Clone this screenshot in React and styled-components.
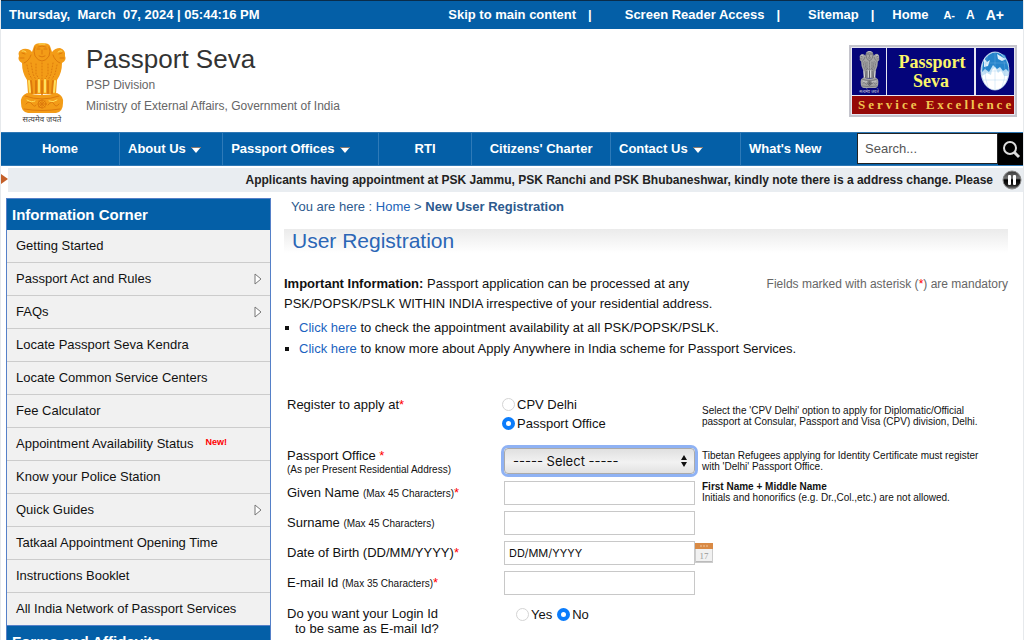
import { useState } from 'react';
import { createGlobalStyle, styled } from 'styled-components';

const GlobalStyle = createGlobalStyle`
	* {
		box-sizing: border-box;
	}
	body {
		margin: 0;
		background: #fff;
		color: #111;
		font-family: 'Liberation Sans', Arial, sans-serif;
		font-size: 13px;
	}
	ul {
		list-style: none;
		margin: 0;
		padding: 0;
	}
	a {
		color: inherit;
		text-decoration: none;
	}
	input, select, button {
		font-family: inherit;
		margin: 0;
	}
`;

const Page = styled.div`
	height: 100vh;
	overflow: auto;
	scrollbar-width: none;
	border-left: 1px solid #e6e9ec;
	border-right: 1px solid #e6e9ec;
`;

const TopBar = styled.div`
	display: flex;
	justify-content: space-between;
	align-items: center;
	padding: 0 19px 0 8px;
	border-top: 1px solid #0a2c4a;
	background: #045fa7;
	color: #fff;
	font-weight: bold;
	line-height: 28px;
`;

const Clock = styled.div`
	white-space: pre;
`;

const TopLinks = styled.nav`
	display: flex;
	align-items: center;
`;

const TopLink = styled.a`
	margin-right: ${({ $gap }) => $gap || 12}px;
`;

const Bar = styled.span`
	margin-right: ${({ $gap }) => $gap}px;
`;

const SizeButton = styled.button`
	border: 0;
	padding: 0;
	margin-left: 11px;
	background: none;
	color: #fff;
	font-weight: bold;
	font-size: ${({ $size }) => $size}px;
`;

const Header = styled.header`
	display: flex;
	align-items: flex-start;
	padding: 14px 6px 7px 16px;

	.emblem {
		width: 50px;
		height: 82px;
		margin-right: 19px;
	}
	.logo {
		width: 168px;
		height: 72px;
		margin: 2px 0 0 auto;
	}
`;

const Brand = styled.div`
	color: #666;
	font-size: 12px;
	line-height: 21px;

	h1 {
		margin: 0 0 -1px;
		color: #333;
		font-size: 26px;
		font-weight: normal;
		line-height: 33px;
	}
	p {
		margin: 0;
	}
`;

const NavBar = styled.div`
	display: flex;
	border-top: 1px solid #2f78b5;
	border-bottom: 1px solid #2f78b5;
	background: #045fa7;
`;

const NavList = styled.ul`
	display: flex;
	flex: 1;
`;

const NavItem = styled.li`
	flex: ${({ $share }) => $share} 1 0;
	border-right: 1px solid #2e7ab8;
	&:last-child {
		border-right: 0;
	}
	a {
		display: flex;
		align-items: center;
		justify-content: ${({ $left }) => ($left ? 'flex-start' : 'center')};
		gap: 5px;
		padding: 0 8px;
		color: #fff;
		font-weight: bold;
		line-height: 32px;
		white-space: nowrap;
	}
	svg {
		margin-top: 2px;
	}
`;

const Search = styled.form`
	display: flex;
	width: 166px;

	input {
		flex: 1;
		min-width: 0;
		margin-bottom: 1px;
		padding: 0 7px;
		border: 1px solid #222;
		border-radius: 0;
		font-size: 13px;
		outline: 0;
		&::placeholder {
			color: #555;
		}
	}
	button {
		width: 25px;
		padding: 0;
		border: 0;
		background: #000;
		line-height: 0;
	}
`;

const Ticker = styled.div`
	display: flex;
	align-items: center;
	margin-top: 2px;
	line-height: 24px;

	p {
		flex: 1;
		margin: 0;
		padding-right: 8px;
		background: #e9edf1;
		color: #222;
		font-size: 12px;
		font-weight: bold;
		text-align: right;
		white-space: nowrap;
	}
	button {
		height: 24px;
		padding: 0 1px;
		border: 0;
		background: #e9edf1;
		line-height: 0;
	}
`;

const Columns = styled.div`
	display: flex;
	align-items: flex-start;
	gap: 13px;
	padding: 6px 15px 0 5px;
`;

const Sidebar = styled.aside`
	width: 265px;
	flex-shrink: 0;
	border: 1px solid #5580c8;
`;

const SideTitle = styled.h2`
	margin: 0;
	padding: 0 5px;
	background: #045fa7;
	color: #fff;
	font-size: 15px;
	line-height: 31px;
`;

const SideItem = styled.li`
	border-bottom: 1px solid #ccc;
	background: #f1f1f1;
	&:last-child {
		border-bottom-color: #5580c8;
	}
	a {
		display: flex;
		align-items: center;
		padding: 0 8px 0 9px;
		line-height: 32px;
	}
	svg {
		margin-left: auto;
	}
	sup {
		margin: -4px 0 0 12px;
		color: #f00;
		font: bold 9px/12px 'Liberation Sans', Arial, sans-serif;
	}
`;

const Main = styled.main`
	flex: 1;
	min-width: 0;
`;

const Crumbs = styled.nav`
	padding-left: 7px;
	color: #2d5a8e;
	line-height: 17px;
	a {
		color: #1b63b8;
	}
`;

const PageTitle = styled.h2`
	margin: 14px 0 0;
	padding-left: 8px;
	background: linear-gradient(#ebebeb, #fff);
	color: #2b66b6;
	font-size: 21px;
	font-weight: normal;
	line-height: 24px;
`;

const Intro = styled.div`
	display: flex;
	justify-content: space-between;
	align-items: flex-start;
	margin-top: 21px;
	line-height: 20px;

	p {
		margin: 0;
	}
	small {
		color: #666;
		font-size: 12px;
		white-space: nowrap;
	}
`;

const Notes = styled.ul`
	padding: 3px 0 0 1px;
	line-height: 21px;
	li {
		display: flex;
		align-items: center;
		gap: 10px;
	}
	li::before {
		content: '';
		width: 4px;
		height: 4px;
		background: #111;
	}
	a {
		color: #1b63c0;
	}
`;

const Form = styled.form`
	display: flex;
	flex-direction: column;
	gap: 6px;
	padding: 36px 0 0 3px;
`;

const Row = styled.div`
	display: grid;
	grid-template-columns: 217px 191px 1fr;
	align-items: start;
	min-height: 24px;
	padding-bottom: ${({ $after }) => $after || 0}px;
`;

const Label = styled.label`
	line-height: ${({ $line }) => $line || 24}px;
	small {
		font-size: 10px;
		line-height: 1;
	}
	small.below {
		display: block;
		line-height: 10px;
	}
	.indent {
		display: block;
		padding-left: 8px;
	}
`;

const Question = styled(Label)`
	padding-top: 5px;
`;

const Star = styled.span`
	color: #f00;
`;

const Help = styled.p`
	margin: 0;
	padding: ${({ $top }) => $top || 0}px 0 0 7px;
	font-size: 10px;
	line-height: 11px;
`;

const TextInput = styled.input`
	width: 100%;
	height: 24px;
	padding: 0 4px;
	border: 1px solid #c8c8c8;
	border-radius: 0;
	background: #fff;
	color: #111;
	font-family: Inter, 'Liberation Sans', sans-serif;
	font-size: 11px;
	outline: 0;
`;

const WithButton = styled.div`
	display: flex;
	button {
		padding: 2px 0 0;
		border: 0;
		background: none;
		line-height: 0;
	}
`;

const SelectBox = styled.div`
	position: relative;
	margin-top: 2px;

	select {
		appearance: none;
		display: block;
		width: 100%;
		height: 26px;
		padding: 0 8px;
		border: 1px solid #aaa;
		border-radius: 4px;
		background: linear-gradient(#e0e0e0, #f2f2f2 55%, #e2e2e2);
		box-shadow: 0 0 0 3px #8fb2f4;
		color: #111;
		font-family: Inter, 'Liberation Sans', sans-serif;
		font-size: 13px;
		outline: 0;
	}
	svg {
		position: absolute;
		top: 7px;
		right: 7px;
		pointer-events: none;
	}
`;

const RadioGroup = styled.div`
	display: flex;
	flex-direction: ${({ $inline }) => ($inline ? 'row' : 'column')};
	gap: ${({ $inline }) => ($inline ? 5 : 0)}px;
	padding-left: ${({ $inline }) => ($inline ? 14 : 0)}px;
	padding-top: ${({ $inline }) => ($inline ? 4 : 0)}px;
	margin-left: -2px;
`;

const RadioLabel = styled.label`
	display: flex;
	align-items: center;
	gap: 2px;
	line-height: 19px;

	input {
		appearance: none;
		width: 13px;
		height: 13px;
		border: 1px solid #d4d4d4;
		border-radius: 50%;
		background: #fff;
		&:checked {
			border: 4px solid #0b7cfb;
		}
	}
`;

const navItems = [
	{ text: 'Home', share: 119 },
	{ text: 'About Us', share: 103, menu: true },
	{ text: 'Passport Offices', share: 156, menu: true },
	{ text: 'RTI', share: 93 },
	{ text: "Citizens' Charter", share: 139 },
	{ text: 'Contact Us', share: 130, menu: true },
	{ text: "What's New", share: 117, left: true },
];

const sideItems = [
	{ text: 'Getting Started' },
	{ text: 'Passport Act and Rules', more: true },
	{ text: 'FAQs', more: true },
	{ text: 'Locate Passport Seva Kendra' },
	{ text: 'Locate Common Service Centers' },
	{ text: 'Fee Calculator' },
	{ text: 'Appointment Availability Status', isNew: true },
	{ text: 'Know your Police Station' },
	{ text: 'Quick Guides', more: true },
	{ text: 'Tatkaal Appointment Opening Time' },
	{ text: 'Instructions Booklet' },
	{ text: 'All India Network of Passport Services' },
];

const gold = { base: '#f39c17', dark: '#dd7a0c', light: '#ffe05e', text: '#444' };
const silver = { base: '#a4a4a4', dark: '#4c4c55', light: '#e8e8e8', text: '#ccd' };

const Lions = ({ tone }) => (
	<g>
		<path
			d='M17 3Q18 0 25 0T33 3L35 9Q38 5 43 5Q49 7 48 13Q50 17 45 20Q45 30 40 37L39 51H11L10 37Q5 30 5 20Q0 17 2 13Q0 8 6 6Q12 5 15 9Z'
			fill={tone.base}
		/>
		<path d='M10 50Q25 54 40 50Q47 53 46 60Q46 69 39 70H11Q4 69 4 60Q3 53 10 50Z' fill={tone.base} />
		<g fill='none' stroke={tone.dark} strokeWidth='1' strokeLinecap='round'>
			<path d='M18 4Q16 8 18 13Q21 18 25 18Q29 18 32 13Q34 8 32 4' />
			<path d='M20 6H23M27 6H30M25 7V11M22 13Q25 15 28 13M21 4Q25 2 29 4' />
			<path d='M5 10L8 11M3 15H7M7 20Q12 18 14 12M45 10L42 11M47 15H43M43 20Q38 18 36 12' />
			<path d='M10 22L12 31L15 36M14 20L16 31L19 37M19 21V31L22 36M25 20V38M31 21V31L28 36M36 20L34 31L31 37M40 22L38 31L35 36' strokeDasharray='1 2' />
			<path d='M14 38L15 50M19 38V50M25 38V51M31 38V50M36 38L35 50' strokeWidth='2' />
			<path d='M8 53Q25 59 42 53M7 66Q25 69 43 66' />
			<circle cx='25' cy='61' r='4' />
			<path d='M25 57V65M21 61H29M22 58L28 64M28 58L22 64M9 61Q12 57 15 61T19 62M31 62Q35 57 37 61T42 61' />
		</g>
		<g fill='none' stroke={tone.light} strokeWidth='2' strokeLinecap='round'>
			<path d='M12 38L13 49M22 37V49M28 37V49M38 38L37 49' />
			<path d='M10 57Q15 60 18 58M32 58Q36 60 40 57' strokeWidth='1' />
			<path d='M5 8Q7 7 9 9M41 9Q43 7 45 8M22 1H28' strokeWidth='1' />
		</g>
	</g>
);

const Emblem = () => (
	<svg className='emblem' viewBox='0 0 50 82' role='img' aria-label='State Emblem of India'>
		<Lions tone={gold} />
		<text x='25' y='79' textAnchor='middle' fontSize='8' fontFamily='"Noto Sans", sans-serif' fill={gold.text}>
			सत्यमेव जयते
		</text>
	</svg>
);

const SevaLogo = () => (
	<svg className='logo' viewBox='0 0 168 72' role='img' aria-label='Passport Seva, Service Excellence'>
		<rect width='168' height='72' fill='#c4c4cc' />
		<rect x='2' y='2' width='164' height='68' fill='#e6e6f2' />
		<rect x='3' y='3' width='34' height='47' fill='#04047a' />
		<rect x='38' y='3' width='87' height='47' fill='#04047a' />
		<rect x='127' y='3' width='38' height='47' fill='#04047a' />
		<rect x='3' y='51' width='162' height='18' fill='#950808' />
		<g transform='translate(10 6) scale(.42 .53)'>
			<Lions tone={silver} />
		</g>
		<text x='20' y='48' textAnchor='middle' fontSize='4' fontFamily='"Noto Sans", sans-serif' fill={silver.text}>
			सत्यमेव जयते
		</text>
		<g fontFamily='"Liberation Serif", serif' fontSize='18' fontWeight='bold' fill='#fbf56a' textAnchor='middle'>
			<text x='83' y='23'>Passport</text>
			<text x='82' y='42'>Seva</text>
		</g>
		<text x='9' y='64' fontSize='13' fontWeight='bold' letterSpacing='3' fontFamily='"Liberation Serif", serif' fill='#f2c550'>
			Service Excellence
		</text>
		<ellipse cx='146' cy='26' rx='14' ry='19' fill='#c5e2f5' />
		<path d='M134 17Q139 8 147 7L156 10L160 19V27L157 24L154 26L151 22L148 24L144 20L140 27L136 24L133 27Z' fill='#2584cb' />
		<path d='M135 13L138 17L141 15L139 21L135 22ZM148 9L153 12L157 14L153 16L149 14Z' fill='#dff0fb' />
		<path d='M133 31L138 28L142 30L143 25L146 22L149 28L152 25L155 31L159 31Q156 44 146 45Q136 44 133 31Z' fill='#fff' />
		<path d='M131 26H161M133 18H159M133 35H159M146 7V45M139 10Q133 26 139 42M153 10Q159 26 153 42' fill='none' stroke='#8cc0e8' strokeWidth='.3' />
		<ellipse cx='146' cy='26' rx='14' ry='19' fill='none' stroke='#d4e8f7' strokeWidth='.8' />
	</svg>
);

const DownArrow = () => (
	<svg width='10' height='6' viewBox='0 0 10 6' aria-hidden='true'>
		<path d='M0 0H10L5 6Z' fill='#fff' />
		<path d='M0 0H10V1H0Z' fill='#8a7a70' />
	</svg>
);

const RightArrow = () => (
	<svg width='8' height='12' viewBox='0 0 8 12' aria-hidden='true'>
		<path d='M1 1V11L7 6Z' fill='#fff' stroke='#777' />
	</svg>
);

const PauseIcon = () => (
	<svg width='20' height='20' viewBox='0 0 20 20' aria-hidden='true'>
		<defs>
			<linearGradient id='pause' x2='0' y2='1'>
				<stop offset='0' stopColor='#333' />
				<stop offset='.4' stopColor='#777' />
				<stop offset='.5' stopColor='#000' />
				<stop offset='.8' stopColor='#222' />
				<stop offset='1' stopColor='#888' />
			</linearGradient>
		</defs>
		<circle cx='10' cy='10' r='9' fill='url(#pause)' stroke='#888' />
		<rect x='6' y='5' width='3' height='10' rx='1' fill='#fff' />
		<rect x='11' y='5' width='3' height='10' rx='1' fill='#fff' />
	</svg>
);

const CalendarIcon = () => (
	<svg width='18' height='20' viewBox='0 0 18 20' aria-hidden='true'>
		<rect x='.5' y='.5' width='17' height='19' fill='#f1f1f1' stroke='#ccc' />
		<rect width='18' height='6' fill='#d98a45' />
		<path d='M5 3H7M8 3H10M11 3H13' stroke='#f0c79e' />
		<path d='M1 18.5H17' stroke='#bbb' />
		<text x='9' y='16' textAnchor='middle' fontSize='9' fontFamily='"Liberation Serif", serif' fill='#999'>17</text>
	</svg>
);

const Required = () => <Star>*</Star>;

const Radio = ({ name, text, value, onChange }) => (
	<RadioLabel>
		<input type='radio' name={name} checked={value === text} onChange={() => onChange(text)} />
		{text}
	</RadioLabel>
);

const RegistrationForm = () => {
	const [applyAt, setApplyAt] = useState('Passport Office');
	const [sameLogin, setSameLogin] = useState('No');

	return (
		<Form>
			<Row $after={7} role='radiogroup' aria-labelledby='apply'>
				<Label as='span' id='apply' $line={19}>
					Register to apply at<Required />
				</Label>
				<RadioGroup>
					<Radio name='apply' text='CPV Delhi' value={applyAt} onChange={setApplyAt} />
					<Radio name='apply' text='Passport Office' value={applyAt} onChange={setApplyAt} />
				</RadioGroup>
				<Help $top={10}>
					Select the 'CPV Delhi' option to apply for Diplomatic/Official
					<br />
					passport at Consular, Passport and Visa (CPV) division, Delhi.
				</Help>
			</Row>
			<Row>
				<Label htmlFor='office' $line={19}>
					Passport Office <Required />
					<small className='below'>(As per Present Residential Address)</small>
				</Label>
				<SelectBox>
					<select id='office'>
						<option>----- Select -----</option>
					</select>
					<svg width='8' height='12' viewBox='0 0 8 12' aria-hidden='true'>
						<path d='M4 0L7 5H1ZM4 12L7 7H1Z' fill='#111' />
					</svg>
				</SelectBox>
				<Help $top={4}>
					Tibetan Refugees applying for Identity Certificate must register
					<br />
					with 'Delhi' Passport Office.
				</Help>
			</Row>
			<Row>
				<Label htmlFor='given'>
					Given Name <small>(Max 45 Characters)</small><Required />
				</Label>
				<TextInput id='given' />
				<Help>
					<b>First Name + Middle Name</b>
					<br />
					Initials and honorifics (e.g. Dr.,Col.,etc.) are not allowed.
				</Help>
			</Row>
			<Row>
				<Label htmlFor='surname'>
					Surname <small>(Max 45 Characters)</small>
				</Label>
				<TextInput id='surname' />
			</Row>
			<Row>
				<Label htmlFor='dob'>
					Date of Birth (DD/MM/YYYY)<Required />
				</Label>
				<TextInput id='dob' defaultValue='DD/MM/YYYY' />
				<WithButton>
					<button type='button' aria-label='Open calendar'>
						<CalendarIcon />
					</button>
				</WithButton>
			</Row>
			<Row>
				<Label htmlFor='email'>
					E-mail Id <small>(Max 35 Characters)</small><Required />
				</Label>
				<TextInput id='email' />
			</Row>
			<Row role='radiogroup' aria-labelledby='same'>
				<Question as='span' id='same' $line={15}>
					Do you want your Login Id
					<span className='indent'>to be same as E-mail Id?</span>
				</Question>
				<RadioGroup $inline>
					<Radio name='same' text='Yes' value={sameLogin} onChange={setSameLogin} />
					<Radio name='same' text='No' value={sameLogin} onChange={setSameLogin} />
				</RadioGroup>
			</Row>
		</Form>
	);
};

const App = () => (
	<>
		<GlobalStyle />
		<Page>
			<TopBar>
				<Clock>{'Thursday,  March  07, 2024 | 05:44:16 PM'}</Clock>
				<TopLinks>
					<TopLink href='#main'>Skip to main content</TopLink>
					<Bar $gap={33}>|</Bar>
					<TopLink href='#reader'>Screen Reader Access</TopLink>
					<Bar $gap={28}>|</Bar>
					<TopLink href='#sitemap'>Sitemap</TopLink>
					<Bar $gap={18}>|</Bar>
					<TopLink href='#home' $gap={4}>Home</TopLink>
					<SizeButton $size={11}>A-</SizeButton>
					<SizeButton $size={12}>A</SizeButton>
					<SizeButton $size={14}>A+</SizeButton>
				</TopLinks>
			</TopBar>
			<Header>
				<Emblem />
				<Brand>
					<h1>Passport Seva</h1>
					<p>PSP Division</p>
					<p>Ministry of External Affairs, Government of India</p>
				</Brand>
				<SevaLogo />
			</Header>
			<NavBar>
				<NavList>
					{navItems.map((item) => (
						<NavItem key={item.text} $share={item.share} $left={item.menu || item.left}>
							<a href='#nav'>
								{item.text}
								{item.menu && <DownArrow />}
							</a>
						</NavItem>
					))}
				</NavList>
				<Search>
					<input type='text' placeholder='Search...' aria-label='Search' />
					<button type='button' aria-label='Search'>
						<svg width='20' height='20' viewBox='0 0 20 20' aria-hidden='true'>
							<circle cx='9' cy='9' r='6' fill='none' stroke='#ddd' strokeWidth='2' />
							<path d='M13 13L18 18' stroke='#ddd' strokeWidth='3' />
						</svg>
					</button>
				</Search>
			</NavBar>
			<Ticker>
				<svg width='7' height='12' viewBox='0 0 7 12' aria-hidden='true'>
					<path d='M0 0L7 5L0 10Z' fill='#c4602a' />
				</svg>
				<p>
					Applicants having appointment at PSK Jammu, PSK Ranchi and PSK Bhubaneshwar, kindly note there is a
					address change. Please
				</p>
				<button type='button' aria-label='Pause'>
					<PauseIcon />
				</button>
			</Ticker>
			<Columns>
				<Sidebar>
					<SideTitle>Information Corner</SideTitle>
					<ul>
						{sideItems.map((item) => (
							<SideItem key={item.text}>
								<a href='#info'>
									{item.text}
									{item.isNew && <sup>New!</sup>}
									{item.more && <RightArrow />}
								</a>
							</SideItem>
						))}
					</ul>
					<SideTitle>Forms and Affidavits</SideTitle>
				</Sidebar>
				<Main id='main'>
					<Crumbs>
						You are here : <a href='#home'>Home</a> &gt; <b>New User Registration</b>
					</Crumbs>
					<PageTitle>User Registration</PageTitle>
					<Intro>
						<p>
							<b>Important Information:</b> Passport application can be processed at any
							<br />
							PSK/POPSK/PSLK WITHIN INDIA irrespective of your residential address.
						</p>
						<small>
							Fields marked with asterisk (<Required />) are mandatory
						</small>
					</Intro>
					<Notes>
						<li>
							<span>
								<a href='#availability'>Click here</a> to check the appointment availability at all PSK/POPSK/PSLK.
							</span>
						</li>
						<li>
							<span>
								<a href='#anywhere'>Click here</a> to know more about Apply Anywhere in India scheme for Passport Services.
							</span>
						</li>
					</Notes>
					<RegistrationForm />
				</Main>
			</Columns>
		</Page>
	</>
);

export default App;
